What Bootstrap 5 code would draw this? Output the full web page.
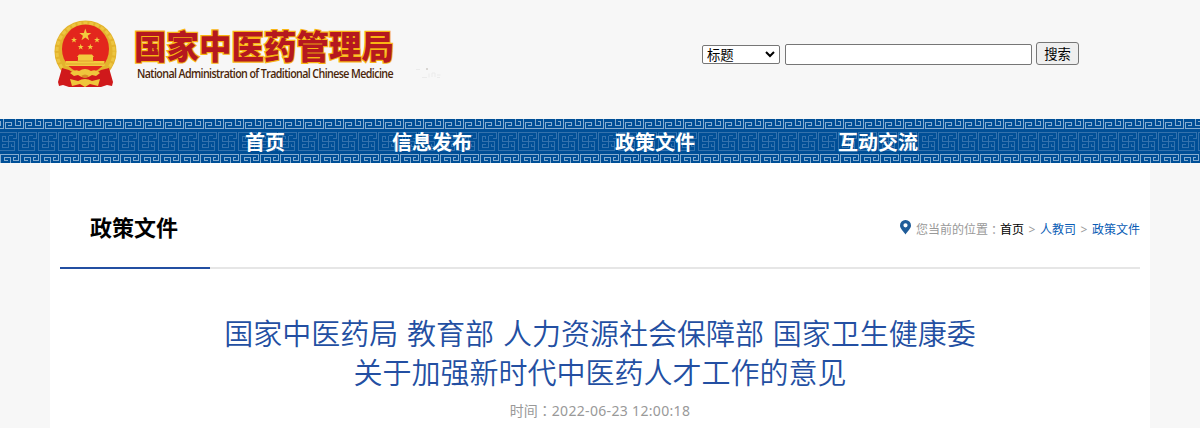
<!DOCTYPE html>
<html lang="zh-CN">
<head>
    <meta charset="UTF-8">
    <meta name="viewport" content="width=device-width, initial-scale=1.0">
    <title>国家中医药管理局</title>
    <link href="https://cdn.jsdelivr.net/npm/bootstrap@5.3.0/dist/css/bootstrap.min.css" rel="stylesheet">
    <style>
        body {
            font-family: "Noto Sans", "Noto Sans CJK SC", sans-serif;
            background-color: #f7f7f7;
            overflow: hidden;
        }
        .site-header {
            height: 119px;
            padding-left: 53px;
        }
        .emblem {
            margin-top: 19px;
        }
        .brand-svg {
            margin-left: 14px;
        }
        .brand-cn {
            font: 900 33px "Noto Sans CJK SC", sans-serif;
            fill: #b5181f;
            stroke: #f9b514;
            stroke-width: 2.4px;
            paint-order: stroke;
        }
        .brand-en {
            font: 600 12.5px "Open Sans", sans-serif;
            letter-spacing: -.7px;
            fill: #4a2508;
        }
        .search-form {
            margin-top: 42px;
            margin-left: 258px;
        }
        .search-form .field-pick,
        .search-form input,
        .search-form button {
            border: 1px solid #767676;
            border-radius: 2px;
            color: #000;
            font: 13.33px/17px "Noto Sans CJK SC", sans-serif;
            padding: 0;
        }
        .search-form .field-pick {
            width: 78px;
            height: 19px;
            background: #fff;
            margin-top: 3px;
            padding: 0 4px;
        }
        .search-form input {
            width: 247px;
            height: 21px;
            margin: 2px 4px 0 5px;
        }
        .search-form button {
            width: 43px;
            height: 23px;
            background: #efefef;
            border-radius: 3px;
        }
        .main-nav {
            height: 44px;
            background: #004f97;
            display: grid;
        }
        .main-nav > * {
            grid-area: 1 / 1;
        }
        .nav-links {
            padding-left: 245px;
        }
        .nav-links a {
            width: 223px;
            font-size: 20px;
            line-height: 48px;
            height: 44px;
            font-weight: 700;
            color: #fff;
            text-decoration: none;
        }
        .nav-links a:first-child {
            width: 147px;
        }
        .page-body {
            width: 1100px;
            height: 265px;
            padding: 0 10px;
        }
        .section-head {
            height: 106px;
            border-bottom: 2px solid #e6e6e6;
        }
        .section-head h2 {
            width: 150px;
            height: 106px;
            padding-left: 30px;
            font-size: 22px;
            line-height: 128px;
            font-weight: 700;
            color: #000;
            border-bottom: 2px solid #234fa2;
        }
        .crumbs {
            font-size: 12px;
            line-height: 18px;
            color: #999;
            margin-top: 58px;
            height: 18px;
        }
        .crumbs svg {
            margin: -1px 5px 0 0;
        }
        .crumbs a {
            color: #0a5cb5;
            text-decoration: none;
        }
        .crumbs .home-link {
            color: #000;
        }
        .crumb-sep {
            width: 16px;
            text-align: center;
        }
        .mid-colon {
            font-family: "Noto Sans CJK TC", sans-serif;
        }
        .article-title {
            font-size: 29px;
            line-height: 39px;
            font-weight: 350;
            word-spacing: 1.3px;
            color: #234fa2;
            margin: 45px 0 0;
        }
        .article-time {
            font-size: 14px;
            line-height: 20px;
            color: #999;
            margin-top: 8px;
        }
        .article-time .stamp {
            letter-spacing: .33px;
        }
    </style>
</head>
<body>
    <header class="site-header d-flex align-items-start">
        <svg class="emblem" width="65" height="70" viewBox="0 0 65 70">
            <circle cx="32.500" cy="32.500" r="31" fill="#e3b32c"/>
            <circle cx="32.500" cy="32.500" r="28.500" fill="none" stroke="#edc541" stroke-width="3" stroke-dasharray="4 2"/>
            <ellipse cx="32.500" cy="30" rx="23.500" ry="24.500" fill="#e3261d"/>
            <g fill="#f2cb3e">
                <path id="star" d="M32.300 9.500l1.500 4.400h4.500l-3.600 2.800 1.400 4.500-3.800-2.800-3.800 2.800 1.400-4.500-3.600-2.800h4.500z"/>
                <use href="#star" transform="translate(4.850 13) scale(.5)"/>
                <use href="#star" transform="translate(27.850 13) scale(.5)"/>
                <use href="#star" transform="translate(11.550 20) scale(.5)"/>
                <use href="#star" transform="translate(21.150 20) scale(.5)"/>
                <path d="M26 35.500h13l2 2.500h-1v4h11.500v5h-39v-5H25v-4h-1z"/>
            </g>
            <path d="M24 42h17M13 45h38" stroke="#dc8f28" stroke-width=".7"/>
            <path d="M9 49l7 2 8 5h16l8-5 8-2 4 14-1 4-5-1-6 2H16l-6-2-4 1-1-4z" fill="#d0191b"/>
            <path d="M17 54q5-4 9-2 6-4 12 0 5-2 9 2l-4 3-4-1q-7 5-14 0l-4 1z" fill="#efc63c"/>
            <path d="M17 60l8 2q7-4 14 0l8-2-2 7-8-2-5 3-5-3-8 2z" fill="#efc63c"/>
            <path d="M28 57q4-3 8 0-4 4-8 0z" fill="#d98a25"/>
        </svg>
        <svg class="brand-svg" width="312" height="90" viewBox="132 0 312 90">
            <text class="brand-cn" x="134" y="58.500" textLength="260" lengthAdjust="spacingAndGlyphs">国家中医药管理局</text>
            <text class="brand-en" x="137" y="78" textLength="256" lengthAdjust="spacingAndGlyphs">National Administration of Traditional Chinese Medicine</text>
            <path d="M416 69.500h4M422 77.500h5M429 73.500v4M432 77v-4h3v4M437 75h3.500M437 77.500h3" fill="none" stroke="#ebebeb"/>
            <path d="M426 69h2" stroke="#bbb5ae"/>
        </svg>
        <form class="search-form d-flex align-items-start">
            <div class="field-pick d-flex justify-content-between align-items-center" role="combobox">
                <span>标题</span>
                <svg width="10" height="7" viewBox="0 0 10 7"><path d="M1 1l4 4 4-4" fill="none" stroke="#000" stroke-width="2"/></svg>
            </div>
            <input type="text">
            <button type="button">搜索</button>
        </form>
    </header>
    <nav class="main-nav">
        <svg width="1200" height="44" shape-rendering="crispEdges">
            <defs>
                <!-- 20px wide meander tiles: top edge, middle band, bottom edge -->
                <pattern id="fretTop" width="20" height="11" patternUnits="userSpaceOnUse" x="5">
                    <path d="M18.500 0V9.500H.5V3.500H6.500V6.500H3M10.500 0V6.500H15.500V2.500H13" fill="none" stroke="#86accf"/>
                </pattern>
                <pattern id="fretMid" width="20" height="20" patternUnits="userSpaceOnUse" x="18" y="13">
                    <path d="M0 18.500H16.500V14.500M.5 18.500V.5H18.500V6.500H14.500M4 9.500H16.500V14.500H13.500V12M10.500 3.500V15.500H4.500V12.500H7.500M10.500 3.500H14.500M4.500 9.500V4.500H7.500V7" fill="none" stroke="#3472ad"/>
                </pattern>
                <pattern id="fretLow" width="20" height="9" patternUnits="userSpaceOnUse" x="20" y="35">
                    <path d="M.5 9V.5H18.500V6.500H13.500V3.500H16M10.500 9V3.500H4.500V6.500H7.500" fill="none" stroke="#86accf"/>
                </pattern>
            </defs>
            <rect width="1200" height="11" fill="url(#fretTop)"/>
            <rect y="13" width="1200" height="20" fill="url(#fretMid)"/>
            <rect y="35" width="1200" height="9" fill="url(#fretLow)"/>
        </svg>
        <div class="nav-links d-flex">
            <a href="#">首页</a>
            <a href="#">信息发布</a>
            <a href="#">政策文件</a>
            <a href="#">互动交流</a>
        </div>
    </nav>
    <main class="page-body bg-white mx-auto">
        <div class="section-head d-flex justify-content-between">
            <h2>政策文件</h2>
            <div class="crumbs d-flex">
                <svg width="11" height="15" viewBox="0 0 11 15"><path fill-rule="evenodd" d="M5.500 0A5.400 5.400 0 0 0 0 5.400C0 8.500 3.500 11 5.500 14.500 7.500 11 11 8.500 11 5.400A5.400 5.400 0 0 0 5.500 0zm0 3.200a2.100 2.100 0 1 1 0 4.200 2.100 2.100 0 0 1 0-4.200z" fill="#1f5c99"/></svg>
                <span>您当前的位置</span><span class="mid-colon" lang="zh-TW">：</span>
                <a class="home-link" href="#">首页</a>
                <span class="crumb-sep">&gt;</span>
                <a href="#">人教司</a>
                <span class="crumb-sep">&gt;</span>
                <a href="#">政策文件</a>
            </div>
        </div>
        <h1 class="article-title text-center">国家中医药局 教育部 人力资源社会保障部 国家卫生健康委<br>关于加强新时代中医药人才工作的意见</h1>
        <div class="article-time text-center">时间<span class="mid-colon" lang="zh-TW">：</span><span class="stamp">2022-06-23 12:00:18</span></div>
    </main>
    <script src="https://cdn.jsdelivr.net/npm/bootstrap@5.3.0/dist/js/bootstrap.bundle.min.js"></script>
</body>
</html>
